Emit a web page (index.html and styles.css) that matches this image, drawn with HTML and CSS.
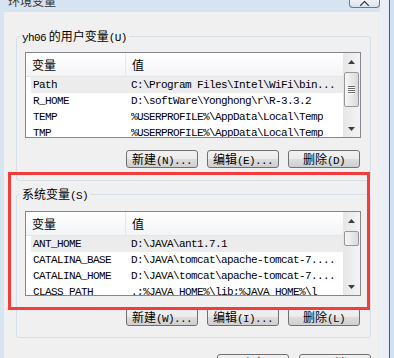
FILE: index.html
```html
<!DOCTYPE html>
<html lang="zh-CN">
<head>
  <meta charset="UTF-8" />
  <title>环境变量</title>
  <link rel="stylesheet" href="styles.css">
</head>
<body>

<div class="window">
  <div class="side-left"></div>

  <div class="main">
    <div class="titlebar">
      <span class="title">环境变量</span>
      <div class="close-btn">
        <svg width="11" height="6" viewBox="0 0 11 6"><path d="M0.5 6 L5.5 1 L10.5 6" fill="none" stroke="#fff" stroke-width="3"/><path d="M1 6 L5.5 1.5 L10 6" fill="none" stroke="#3c4452" stroke-width="1.4"/></svg>
      </div>
    </div>

    <div class="client">
      <!-- user variables -->
      <div class="group group-user">
        <div class="group-label"><span class="m">yh06</span> 的用户变量<span class="m">(U)</span></div>
        <div class="listview list-user">
          <div class="list-main">
            <div class="list-head"><div class="col1">变量</div><div class="col2">值</div></div>
            <div class="row selected"><div class="col1">Path</div><div class="col2">C:\Program Files\Intel\WiFi\bin...</div></div>
            <div class="row"><div class="col1">R_HOME</div><div class="col2">D:\softWare\Yonghong\r\R-3.3.2</div></div>
            <div class="row"><div class="col1">TEMP</div><div class="col2">%USERPROFILE%\AppData\Local\Temp</div></div>
            <div class="row"><div class="col1">TMP</div><div class="col2">%USERPROFILE%\AppData\Local\Temp</div></div>
          </div>
          <div class="vscroll">
            <div class="sb-btn"><svg width="7" height="4" viewBox="0 0 7 4"><polygon points="3.5,0 7,4 0,4" fill="#3e3e3e"/></svg></div>
            <div class="sb-track">
              <div class="thumb thumb-user"><i></i><i></i><i></i><i></i></div>
            </div>
            <div class="sb-btn"><svg width="7" height="4" viewBox="0 0 7 4"><polygon points="0,0 7,0 3.5,4" fill="#3e3e3e"/></svg></div>
          </div>
        </div>
        <div class="btn-row">
          <button class="btn">新建<span class="m">(N)...</span></button>
          <button class="btn">编辑<span class="m">(E)...</span></button>
          <button class="btn">删除<span class="m">(D)</span></button>
        </div>
      </div>

      <!-- system variables -->
      <div class="group group-sys">
        <div class="group-label">系统变量<span class="m">(S)</span></div>
        <div class="listview list-sys">
          <div class="list-main">
            <div class="list-head"><div class="col1">变量</div><div class="col2">值</div></div>
            <div class="row selected"><div class="col1">ANT_HOME</div><div class="col2">D:\JAVA\ant1.7.1</div></div>
            <div class="row"><div class="col1">CATALINA_BASE</div><div class="col2">D:\JAVA\tomcat\apache-tomcat-7....</div></div>
            <div class="row"><div class="col1">CATALINA_HOME</div><div class="col2">D:\JAVA\tomcat\apache-tomcat-7....</div></div>
            <div class="row"><div class="col1">CLASS_PATH</div><div class="col2">.;%JAVA_HOME%\lib;%JAVA_HOME%\l</div></div>
          </div>
          <div class="vscroll">
            <div class="sb-btn"><svg width="7" height="4" viewBox="0 0 7 4"><polygon points="3.5,0 7,4 0,4" fill="#3e3e3e"/></svg></div>
            <div class="sb-track">
              <div class="thumb thumb-sys"></div>
            </div>
            <div class="sb-btn"><svg width="7" height="4" viewBox="0 0 7 4"><polygon points="0,0 7,0 3.5,4" fill="#3e3e3e"/></svg></div>
          </div>
        </div>
        <div class="btn-row">
          <button class="btn">新建<span class="m">(W)...</span></button>
          <button class="btn">编辑<span class="m">(I)...</span></button>
          <button class="btn">删除<span class="m">(L)</span></button>
        </div>
      </div>

      <div class="dialog-buttons">
        <button class="btn">确定</button>
        <button class="btn">取消</button>
      </div>
    </div>
  </div>

  <div class="side-right"></div>

  <div class="mark"></div>
</div>

</body>
</html>
```

FILE: styles.css
```css
body {
  margin: 0;
  font: 12px/14px "Noto Sans CJK SC", sans-serif;
  color: #000;
  background: #d6e3f1;
}
.window {
  position: relative;
  display: flex;
  width: 394px;
  height: 358px;
  overflow: hidden;
  background: #d6e3f1;
}
.side-left {
  width: 4px;
  flex: none;
}
.main {
  width: 376px;
  flex: none;
  display: flex;
  flex-direction: column;
}
.titlebar {
  height: 12px;
  flex: none;
  display: flex;
  justify-content: space-between;
  align-items: flex-start;
  padding-left: 4px;
}
.title {
  line-height: 12px;
  margin-top: -5px;
  color: #333;
}
.close-btn {
  width: 29px;
  height: 7px;
  border: 1px solid #6b7687;
  border-top: 0;
  border-radius: 0 0 4px 4px;
  background: linear-gradient(#eef2f7, #d8e2ed);
  display: flex;
  justify-content: center;
  overflow: hidden;
}
.client {
  flex: 1;
  background: #f0f0f0;
  padding: 24px 9px 0 12px;
}
.side-right {
  width: 14px;
  flex: none;
  background: linear-gradient(to right, #e9eef5 0, #e9eef5 9px, #4f5866 9px, #4f5866 10px, #d3e0ef 10px);
}

/* group boxes */
.group {
  border: 1px solid #d5dfe5;
  border-radius: 3px;
  padding: 0 9px 12px 8px;
}
.group-sys {
  margin-top: 13px;
  padding-bottom: 11px;
}
.group-label {
  width: max-content;
  margin: -7px 0 0 -5px;
  padding: 0 2px;
  background: #f0f0f0;
  line-height: 12px;
  white-space: nowrap;
}
.m {
  font-family: "Liberation Mono", monospace;
  font-size: 11px;
  letter-spacing: -0.6px;
}

/* list views */
.listview {
  display: flex;
  box-sizing: border-box;
  margin-top: 8px;
  height: 86px;
  border: 1px solid #828790;
  background: #fff;
}
.list-sys {
  margin-top: 9px;
  height: 85px;
}
.list-main {
  flex: 1;
  overflow: hidden;
}
.list-head {
  display: flex;
  height: 23px;
  line-height: 23px;
  border-bottom: 1px solid #e5e5e5;
  background: linear-gradient(#ffffff, #f3f4f6);
}
.list-head .col1 {
  width: 100px;
  box-sizing: border-box;
  padding-left: 6px;
  border-right: 1px solid #e3e6ea;
}
.list-head .col2 {
  padding-left: 6px;
}
.row {
  display: flex;
  height: 16px;
  margin-left: 5px;
  font: 11px/16px "Liberation Mono", monospace;
  letter-spacing: -0.6px;
  white-space: nowrap;
}
.row .col1 {
  width: 95px;
  flex: none;
  box-sizing: border-box;
  padding-left: 2px;
}
.row .col2 {
  padding-left: 5px;
}
.row.selected {
  background: #ececec;
}

/* scrollbar */
.vscroll {
  width: 17px;
  flex: none;
  display: flex;
  flex-direction: column;
  background: linear-gradient(to right, #e6e6e6, #f4f4f4);
}
.sb-btn {
  height: 17px;
  flex: none;
  display: flex;
  align-items: center;
  justify-content: center;
}
.sb-track {
  flex: 1;
  padding-top: 2px;
}
.thumb {
  margin: 0 1px;
  box-sizing: border-box;
  border: 1px solid #979797;
  border-radius: 2px;
  background: linear-gradient(to right, #f6f6f6, #e9e9e9 50%, #d9d9d9);
  display: flex;
  flex-direction: column;
  align-items: center;
  justify-content: center;
  gap: 1px;
}
.thumb i {
  width: 7px;
  height: 1px;
  background: #6a6a6a;
  box-shadow: 0 1px 0 #fff;
}
.thumb-user {
  height: 35px;
}
.thumb-sys {
  height: 15px;
}

/* buttons */
.btn-row {
  display: flex;
  justify-content: flex-end;
  gap: 9px;
  margin-top: 12px;
  padding-right: 1px;
}
.btn {
  width: 72px;
  height: 18px;
  box-sizing: border-box;
  padding: 0;
  border: 1px solid #707070;
  border-radius: 3px;
  background: linear-gradient(#f2f2f2, #ebebeb 50%, #dddddd 50%, #cfcfcf);
  font: 12px/16px "Noto Sans CJK SC", sans-serif;
  color: #000;
  text-align: center;
  white-space: nowrap;
}
.dialog-buttons {
  display: flex;
  justify-content: flex-end;
  gap: 10px;
  margin-top: 16px;
}

/* red annotation box */
.mark {
  position: absolute;
  left: 8px;
  top: 172px;
  width: 362px;
  height: 138px;
  box-sizing: border-box;
  border: 3px solid #f43c3c;
}
```
